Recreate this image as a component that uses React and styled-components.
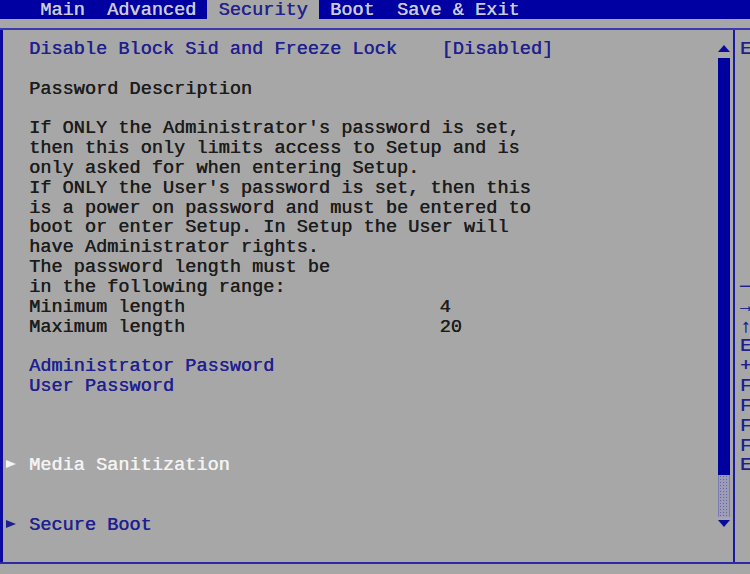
import React from "react";
import styled, { createGlobalStyle } from "styled-components";

// text grid of the setup screen
const CELL = 11.15;
const ROW = 19.83;

const GRAY = "#a7a7a7";
const BLUE = "#0000a2";
const INK_BLUE = "#1f1f90";
const INK_DARK = "#1c1c1c";
const INK_WHITE = "#f3f3f3";

const GlobalStyle = createGlobalStyle`
  *, *::before, *::after { box-sizing: border-box; }
  html, body {
    margin: 0;
    padding: 0;
    background: ${GRAY};
    overflow: hidden;
  }
`;

const Screen = styled.div`
  width: 750px;
  height: 574px;
  display: flex;
  flex-direction: column;
  background: ${GRAY};
  font-family: "Liberation Mono", "DejaVu Sans Mono", monospace;
  font-size: 18.58px;
  text-shadow: 0.4px 0 0 currentColor;
  overflow: hidden;
`;

const TabBar = styled.div`
  flex: none;
  height: 19px;
  display: flex;
  align-items: flex-start;
  padding-left: 29px;
  background: ${BLUE};
`;

const Tab = styled.div`
  height: 19px;
  padding: 0 ${CELL}px;
  line-height: 22px;
  white-space: pre;
  color: ${(p) => (p.$active ? "#22228e" : "#cbcbd8")};
  background: ${(p) => (p.$active ? GRAY : "transparent")};
`;

const Strip = styled.div`
  flex: none;
  height: 9px;
`;

const Body = styled.div`
  flex: none;
  height: 536px;
  display: flex;
  border-top: 2px solid #3a3aac;
  border-bottom: 2px solid #2a2aa6;
`;

const MainPanel = styled.div`
  flex: none;
  width: 718px;
  border-left: 3px solid #0a0aa0;
  padding-top: 10px;
  display: flex;
  flex-direction: column;
`;

const Row = styled.div`
  display: flex;
  height: ${ROW}px;
  line-height: ${ROW}px;
  white-space: pre;
  color: ${(p) =>
    p.$tone === "white" ? INK_WHITE : p.$tone === "dark" ? INK_DARK : INK_BLUE};
`;

const Marker = styled.div`
  flex: none;
  width: 26px;
  display: flex;
  align-items: center;
  padding-left: 3px;
  padding-bottom: 4px;
`;

const Pointer = styled.span`
  width: 0;
  height: 0;
  border-left: 10px solid currentColor;
  border-top: 4.5px solid transparent;
  border-bottom: 4.5px solid transparent;
`;

const Label = styled.span`
  flex: none;
  width: ${37 * CELL}px;
`;

const Value = styled.span`
  flex: none;
  margin-left: ${(p) => p.$nudge || 0}px;
`;

const Gap = styled.div`
  flex: none;
  height: ${(p) => p.$rows * ROW}px;
`;

const ScrollColumn = styled.div`
  flex: none;
  width: 12px;
  margin-right: 3px;
  padding-top: 15px;
  display: flex;
  flex-direction: column;
`;

const ArrowUp = styled.div`
  width: 0;
  height: 0;
  border-left: 6px solid transparent;
  border-right: 6px solid transparent;
  border-bottom: 7px solid #0a0a9c;
`;

const ArrowDown = styled.div`
  width: 0;
  height: 0;
  margin-top: 3px;
  border-left: 6px solid transparent;
  border-right: 6px solid transparent;
  border-top: 7px solid #0a0a9c;
`;

const Track = styled.div`
  margin-top: 6px;
  height: 459px;
  display: flex;
  flex-direction: column;
  background-color: #9c9cb6;
  background-image: radial-gradient(#6464a4 0.7px, transparent 0.9px);
  background-size: 3px 3px;
  border-left: 1px solid #7c7cb0;
  border-right: 1px solid #7c7cb0;
`;

const Thumb = styled.div`
  flex: none;
  height: ${(p) => p.$size}px;
  margin: 0 -1px;
  background: #00009e;
`;

const Divider = styled.div`
  flex: none;
  width: 2px;
  background: #1a1aa2;
`;

const HelpPanel = styled.div`
  flex: 1;
  min-width: 0;
  padding: 10px 0 0 5px;
  overflow: hidden;
  display: flex;
  flex-direction: column;
`;

const description = [
  "If ONLY the Administrator's password is set,",
  "then this only limits access to Setup and is",
  "only asked for when entering Setup.",
  "If ONLY the User's password is set, then this",
  "is a power on password and must be entered to",
  "boot or enter Setup. In Setup the User will",
  "have Administrator rights.",
  "The password length must be",
  "in the following range:",
];

const keys = [
  "\u2192\u2190: Select Screen",
  "\u2191\u2193: Select Item",
  "Enter: Select",
  "+/-: Change Opt.",
  "F1: General Help",
  "F2: Previous Values",
  "F3: Optimized Defaults",
  "F4: Save & Exit",
  "ESC: Exit",
];

const tabs = ["Main", "Advanced", "Security", "Boot", "Save & Exit"];

export default function App() {
  return (
    <Screen>
      <GlobalStyle />
      <TabBar>
        {tabs.map((t) => (
          <Tab key={t} $active={t === "Security"}>
            {t}
          </Tab>
        ))}
      </TabBar>
      <Strip />
      <Body>
        <MainPanel>
          <Row>
            <Marker />
            <Label>Disable Block Sid and Freeze Lock</Label>
            <Value>[Disabled]</Value>
          </Row>
          <Gap $rows={1} />
          <Row $tone="dark">
            <Marker />
            Password Description
          </Row>
          <Gap $rows={1} />
          {description.map((line) => (
            <Row key={line} $tone="dark">
              <Marker />
              {line}
            </Row>
          ))}
          <Row $tone="dark">
            <Marker />
            <Label>Minimum length</Label>
            <Value $nudge={-2}>4</Value>
          </Row>
          <Row $tone="dark">
            <Marker />
            <Label>Maximum length</Label>
            <Value $nudge={-2}>20</Value>
          </Row>
          <Gap $rows={1} />
          <Row>
            <Marker />
            Administrator Password
          </Row>
          <Row>
            <Marker />
            User Password
          </Row>
          <Gap $rows={3} />
          <Row $tone="white">
            <Marker>
              <Pointer />
            </Marker>
            Media Sanitization
          </Row>
          <Gap $rows={2} />
          <Row>
            <Marker>
              <Pointer />
            </Marker>
            Secure Boot
          </Row>
        </MainPanel>

        <ScrollColumn>
          <ArrowUp />
          <Track>
            <Thumb $size={417} />
          </Track>
          <ArrowDown />
        </ScrollColumn>

        <Divider />

        <HelpPanel>
          <Row>Enable or Disable Block Sid and Freeze Lock</Row>
          <Gap $rows={11} />
          <Row>{"\u2500".repeat(24)}</Row>
          {keys.map((k) => (
            <Row key={k}>{k}</Row>
          ))}
        </HelpPanel>
      </Body>
    </Screen>
  );
}
